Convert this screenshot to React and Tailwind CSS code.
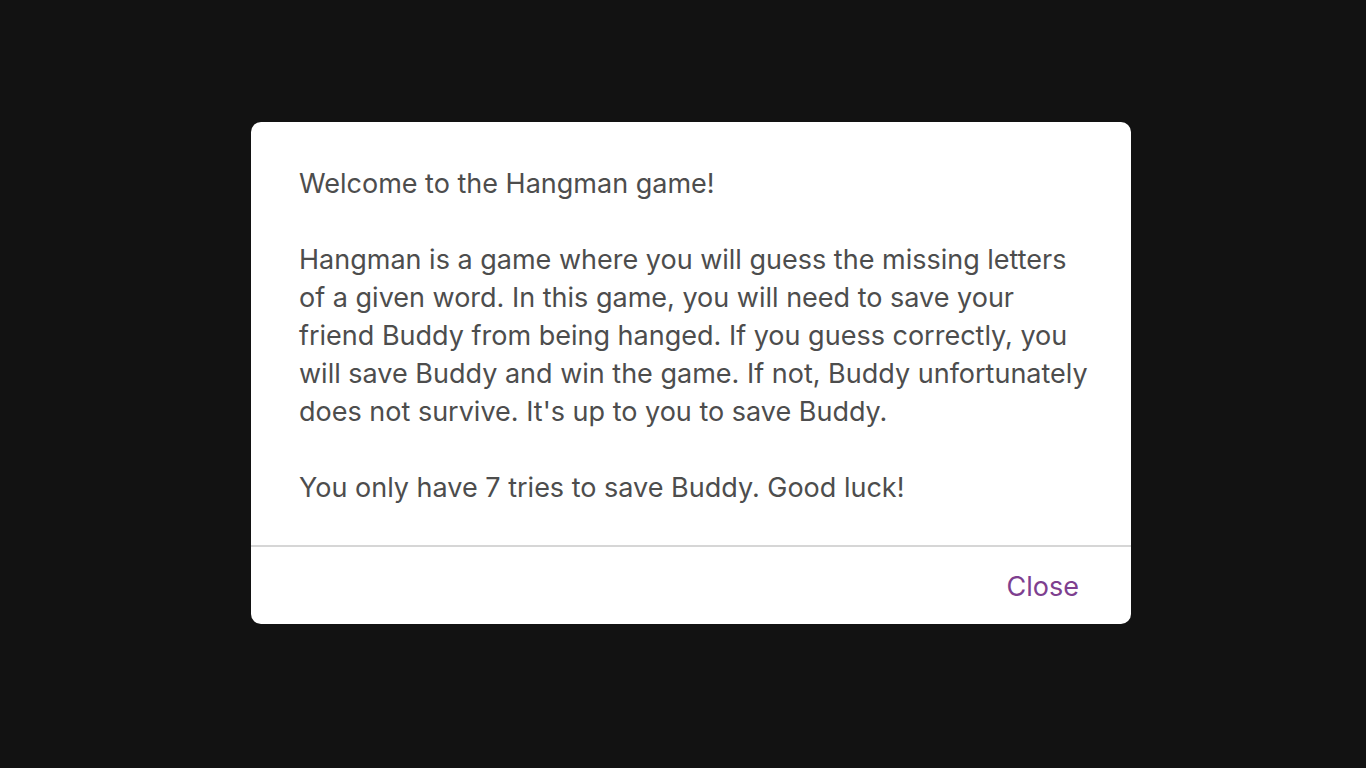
export default function App() {
  return (
    <div className="min-h-screen w-full bg-[#121212] flex items-center justify-center" style={{ fontFamily: 'Inter, "Noto Sans", sans-serif' }}>
      <div className="w-[880px] ml-4 mb-[22px] bg-white rounded-[10px] overflow-hidden">
        {/* Body */}
        <div className="pt-[43px] pb-[38px] pl-12 pr-[42px] text-[27px] leading-[38px] text-[#4d4d4d]">
          <p>Welcome to the Hangman game!</p>
          <p className="mt-[38px]">
            Hangman is a game where you will guess the missing letters of a given word. In this game, you will need to save
            your friend Buddy from being hanged. If you guess correctly, you will save Buddy and win the game. If not, Buddy
            unfortunately does not survive. It's up to you to save Buddy.
          </p>
          <p className="mt-[38px]">You only have 7 tries to save Buddy. Good luck!</p>
        </div>

        {/* Footer */}
        <div className="border-t-2 border-[#d6d6d6] h-[79px] pt-1 flex items-center justify-end pr-[52px]">
          <button className="text-[27px] text-[#7e3f8f]">Close</button>
        </div>
      </div>
    </div>
  )
}
